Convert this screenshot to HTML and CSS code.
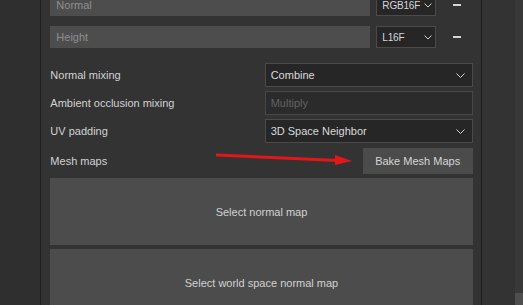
FILE: index.html
```html
<!DOCTYPE html>
<html lang="en">
  <head>
    <meta charset="UTF-8" />
    <meta name="viewport" content="width=device-width, initial-scale=1.0" />
    <title>Mesh Maps</title>
    <link rel="stylesheet" href="styles.css">
  </head>

  <body>
    <div class="window">
      <!-- Left gutter -->
      <div class="gutter"></div>

      <!-- Settings panel -->
      <div class="panel">
        <div class="map-row">
          <div class="text-field placeholder">Normal</div>
          <div class="format-select">
            <span>RGB16F</span>
            <svg class="chevron" width="8" height="5" viewBox="0 0 8 5"><path d="M0.5 0.5 L4 4 L7.5 0.5" /></svg>
          </div>
          <span class="minus"></span>
        </div>
        <div class="map-row">
          <div class="text-field placeholder">Height</div>
          <div class="format-select">
            <span>L16F</span>
            <svg class="chevron" width="8" height="5" viewBox="0 0 8 5"><path d="M0.5 0.5 L4 4 L7.5 0.5" /></svg>
          </div>
          <span class="minus"></span>
        </div>

        <div class="settings">
          <div class="setting">
            <label>Normal mixing</label>
            <div class="select">
              <span>Combine</span>
              <svg class="chevron" width="9" height="5" viewBox="0 0 9 5"><path d="M0.5 0.5 L4.5 4.5 L8.5 0.5" /></svg>
            </div>
          </div>
          <div class="setting">
            <label>Ambient occlusion mixing</label>
            <div class="select disabled"><span>Multiply</span></div>
          </div>
          <div class="setting">
            <label>UV padding</label>
            <div class="select">
              <span>3D Space Neighbor</span>
              <svg class="chevron" width="9" height="5" viewBox="0 0 9 5"><path d="M0.5 0.5 L4.5 4.5 L8.5 0.5" /></svg>
            </div>
          </div>
          <div class="setting bake">
            <label>Mesh maps</label>
            <button class="bake-button">Bake Mesh Maps</button>
          </div>
        </div>

        <div class="drop-box">Select normal map</div>
        <div class="drop-box">Select world space normal map</div>

        <!-- Annotation arrow -->
        <svg class="arrow" width="140" height="14" viewBox="0 0 140 14">
          <line x1="1" y1="2" x2="122" y2="7.5" stroke="#e3161a" stroke-width="3" stroke-linecap="round" />
          <polygon points="119,2 136,8 119,12" fill="#e3161a" />
        </svg>
      </div>

      <!-- Right column -->
      <div class="side"></div>
      <div class="scrollbar"><div class="thumb"></div></div>
    </div>
  </body>
</html>
```

FILE: styles.css
```css
/* General Styles */

body {
  font-family: "Liberation Sans", Arial, sans-serif;
  font-size: 11px;
  margin: 0;
  padding: 0;
  background-color: #2f2f2f;
  color: #d2d2d2;
  overflow: hidden;
}

.window {
  display: flex;
  height: 305px;
}

.gutter {
  width: 41px;
  background-color: #2f2f2f;
  border-right: 1px solid #1d1d1d;
}

.panel {
  position: relative;
  width: 429px;
  padding: 0 8px 0 9px;
  background-color: #333333;
  border-right: 1px solid #1d1d1d;
  margin-top: -6px;
}

.side {
  width: 34px;
  background-color: #333333;
}

.scrollbar {
  width: 8px;
  background-color: #383838;
  display: flex;
  flex-direction: column;
  justify-content: flex-end;
}

.thumb {
  height: 12px;
  background-color: #4e4e4e;
}
/* Texture rows */

.map-row {
  display: flex;
  align-items: center;
  height: 22px;
  margin-bottom: 10px;
}

.text-field {
  width: 314px;
  height: 22px;
  line-height: 22px;
  padding-left: 6px;
  background-color: #4d4d4d;
  color: #8f8f8f;
}

.format-select {
  display: flex;
  align-items: center;
  justify-content: space-between;
  box-sizing: border-box;
  width: 60px;
  height: 22px;
  margin-left: 6px;
  padding: 0 3px 0 5px;
  background-color: #262626;
  border: 1px solid #4a4a4a;
  color: #d6d6d6;
  font-size: 10px;
  letter-spacing: -0.2px;
}

.chevron path {
  fill: none;
  stroke: #cfcfcf;
  stroke-width: 1;
}

.minus {
  width: 8px;
  height: 2px;
  margin-left: 17px;
  background-color: #d4d4d4;
}
/* Settings */

.settings {
  margin-top: 15px;
}

.setting {
  display: flex;
  align-items: center;
  justify-content: space-between;
  margin-bottom: 4px;
}

.setting label {
  color: #d2d2d2;
}

.select {
  display: flex;
  align-items: center;
  justify-content: space-between;
  box-sizing: border-box;
  width: 208px;
  height: 24px;
  padding: 0 7px 0 5px;
  background-color: #262626;
  border: 1px solid #4a4a4a;
  color: #dadada;
}

.select.disabled {
  background-color: #2b2b2b;
  border-color: #474747;
  color: #626262;
}

.setting.bake {
  margin-top: 5px;
}

.bake-button {
  width: 110px;
  height: 26px;
  border: none;
  background-color: #4b4b4b;
  color: #d6d6d6;
  font-family: "Liberation Sans", Arial, sans-serif;
  font-size: 11px;
  padding: 0;
}
/* Drop boxes */

.drop-box {
  display: flex;
  align-items: center;
  justify-content: center;
  height: 67px;
  margin-bottom: 4px;
  background-color: #4c4c4c;
  color: #d2d2d2;
}

.arrow {
  position: absolute;
  left: 175px;
  top: 159px;
}
```
